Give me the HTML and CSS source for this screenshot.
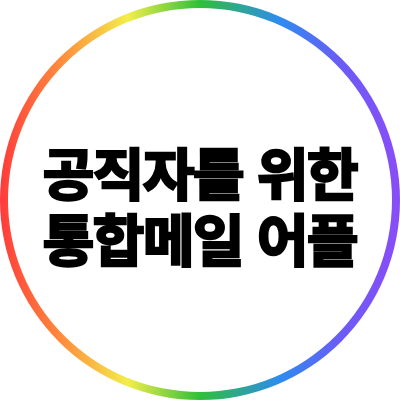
FILE: index.html
```html
<!DOCTYPE html>
<html lang="ko">
<head>
	<meta charset="utf-8">
	<title>공직자를 위한 통합메일 어플</title>
	<link rel="stylesheet" href="styles.css">
</head>
<body>
	<div class="ring">
		<div class="inner">
			<div class="title">
				<p class="line">공직자를 위한</p>
				<p class="line">통합메일 어플</p>
			</div>
		</div>
	</div>
</body>
</html>
```

FILE: styles.css
```css
body{
	margin: 0;
	padding: 0;
	background: #fff;
}
.ring{
	box-sizing: border-box;
	width: 400px;
	height: 400px;
	padding: 8px;
	border-radius: 50%;
	background: linear-gradient(90deg, #ff3b3b 0%, #ff8a3c 15%, #f2ee4a 32%, #2fbf3a 50%, #2e8bf0 70%, #6a5cf6 85%, #8a4cf7 100%);
}
.inner{
	width: 100%;
	height: 100%;
	border-radius: 50%;
	background: #fff;
	display: flex;
	align-items: center;
	justify-content: center;
}
.title{
	font-family: "Noto Sans CJK KR", sans-serif;
	font-weight: 700;
	font-size: 56px;
	letter-spacing: -1.5px;
	color: #000;
	text-align: center;
	padding-top: 8px;
}
.line{
	margin: 0;
	height: 66px;
	line-height: 66px;
	-webkit-text-stroke: 2.5px #000;
}
```
